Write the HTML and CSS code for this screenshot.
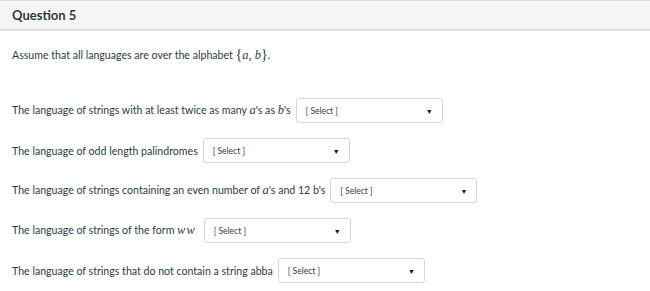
FILE: index.html
```html
<!DOCTYPE html>
<html lang="en">
<head>
    <meta charset="UTF-8">
    <title>Question 5</title>
    <link rel="stylesheet" href="styles.css">
</head>
<body>
    <div class="question">
        <div class="header">
            <h2>Question 5</h2>
        </div>

        <div class="content">
            <p class="intro">Assume that all languages are over the alphabet <span class="math"><span class="brace">{</span><i>a</i>, <i>b</i><span class="brace">}</span></span>.</p>

            <div class="row">
                <span class="label">The language of strings with at least twice as many <i class="math">a</i>'s as <i class="math">b</i>'s</span>
                <span class="select"><span>[ Select ]</span><span class="arrow">&#9660;</span></span>
            </div>

            <div class="row">
                <span class="label">The language of odd length palindromes</span>
                <span class="select"><span>[ Select ]</span><span class="arrow">&#9660;</span></span>
            </div>

            <div class="row">
                <span class="label">The language of strings containing an even number of <i class="math">a</i>'s and 12 b's</span>
                <span class="select"><span>[ Select ]</span><span class="arrow">&#9660;</span></span>
            </div>

            <div class="row">
                <span class="label">The language of strings of the form <i class="math ww">ww</i></span>
                <span class="select"><span>[ Select ]</span><span class="arrow">&#9660;</span></span>
            </div>

            <div class="row">
                <span class="label">The language of strings that do not contain a string abba</span>
                <span class="select"><span>[ Select ]</span><span class="arrow">&#9660;</span></span>
            </div>
        </div>
    </div>
</body>
</html>
```

FILE: styles.css
```css
* {
    margin: 0;
    padding: 0;
    box-sizing: border-box;
}

body {
    font-family: Lato, 'Liberation Sans', Arial, sans-serif;
    color: #2d3b45;
    background: white;
}

.header {
    height: 31px;
    background: #f5f5f5;
    border-top: 1px solid #e0e0e0;
    border-bottom: 2px solid #dedede;
    padding: 0 12px;
    display: flex;
    align-items: center;
}

.header h2 {
    font-size: 13px;
    font-weight: bold;
    color: #2d3b45;
}

.content {
    padding: 17px 12px 0;
}

.intro {
    font-size: 10.6px;
    line-height: 14px;
    margin-bottom: 36px;
}

.math {
    font-family: 'Liberation Serif', 'DejaVu Serif', serif;
    font-size: 12.5px;
}

.ww {
    letter-spacing: 1px;
    margin-right: 3px;
}

.brace {
    font-size: 14px;
}

.row {
    display: flex;
    align-items: center;
    height: 25px;
    margin-bottom: 15px;
    font-size: 10.6px;
}

.label {
    margin-right: 5px;
}

.select {
    width: 147px;
    height: 25px;
    border: 1px solid #d3d7da;
    border-radius: 3px;
    display: flex;
    align-items: center;
    justify-content: space-between;
    padding: 0 9px 0 9px;
    font-size: 8.5px;
    background: white;
}

.arrow {
    font-size: 7px;
    color: #111;
}
```
